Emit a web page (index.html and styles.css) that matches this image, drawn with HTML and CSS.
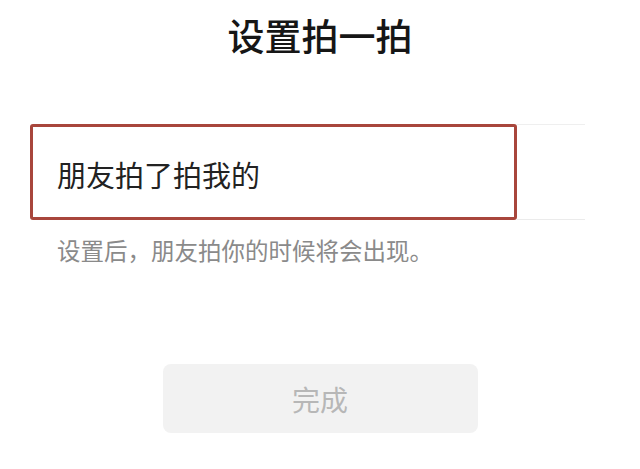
FILE: index.html
```html
<!DOCTYPE html>
<html lang="zh-CN">
<head>
  <meta charset="UTF-8">
  <meta name="viewport" content="width=device-width, initial-scale=1.0">
  <title>设置拍一拍</title>
  <link rel="stylesheet" href="styles.css">
</head>
<body>
  <h1 class="title">设置拍一拍</h1>

  <!-- 输入行，红框为标注 -->
  <div class="field">
    <div class="field-input">朋友拍了拍我的</div>
    <div class="field-rest"></div>
  </div>
  <p class="hint">设置后，朋友拍你的时候将会出现。</p>

  <button class="done-btn" disabled>完成</button>
</body>
</html>
```

FILE: styles.css
```css
body {
  margin: 0;
  background: #fff;
  font-family: "Noto Sans CJK SC", "Noto Sans", sans-serif;
  color: #1a1a1a;
}
.title {
  margin: 0;
  padding-top: 17px;
  font-size: 37px;
  line-height: 37px;
  font-weight: 500;
  text-align: center;
  color: #161616;
}
.field {
  display: flex;
  margin: 70px 55px 0 30px;
}
.field-input {
  box-sizing: border-box;
  width: 487px;
  height: 96px;
  border: 3px solid #a8463c;
  border-radius: 3px;
  padding: 3px 0 0 24px;
  display: flex;
  align-items: center;
  font-size: 29px;
  color: #222;
}
.field-rest {
  flex: 1;
  border-top: 1px solid #efefef;
  border-bottom: 1px solid #ebebeb;
}
.hint {
  margin: 18px 0 0 57px;
  font-size: 23.5px;
  line-height: 24px;
  color: #8a8a8a;
}
.done-btn {
  display: block;
  margin: 102px auto 0;
  width: 315px;
  height: 69px;
  border: none;
  border-radius: 8px;
  background: #f2f2f2;
  font-family: "Noto Sans CJK SC", sans-serif;
  font-size: 28px;
  color: #b7b7b7;
  padding: 0;
}
```
